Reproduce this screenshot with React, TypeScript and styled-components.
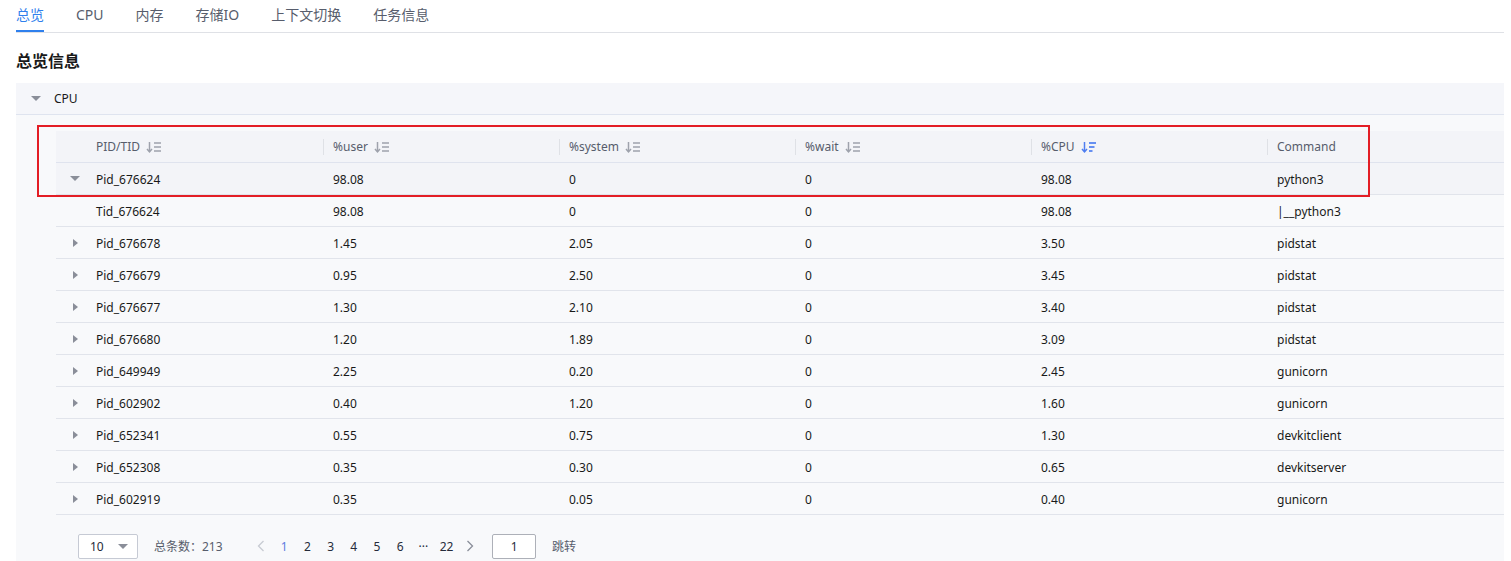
import React, { FC } from 'react'
import styled, { createGlobalStyle } from 'styled-components'

const GlobalStyle = createGlobalStyle`
    body {
        margin: 0;
        background: #ffffff;
        font-family: "Noto Sans", "Noto Sans CJK SC", sans-serif;
        color: #252b3a;
    }
`

const Page = styled.div`
    position: relative;
    padding: 0 7px 0 16px;
    width: 1511px;
    height: 561px;
    box-sizing: border-box;
    overflow: hidden;
`

const Tabs = styled.div`
    display: flex;
    gap: 32px;
    height: 32px;
    border-bottom: 1px solid #dfe1e6;
`

const Tab = styled.div<{ $active?: boolean }>`
    font-size: 14px;
    line-height: 30px;
    color: ${p => (p.$active ? '#2f80ed' : '#575d6c')};
    border-bottom: 2px solid ${p => (p.$active ? '#2f80ed' : 'transparent')};
`

const Title = styled.h2`
    margin: 16px 0 10px;
    font-size: 16px;
    font-weight: 700;
    line-height: 24px;
    color: #191919;
`

const Panel = styled.div`
    background: #f8f9fb;
`

const PanelHeader = styled.div`
    display: flex;
    align-items: center;
    gap: 13px;
    height: 32px;
    box-sizing: border-box;
    padding-left: 15px;
    background: #f5f6fa;
    border-bottom: 1px solid #dfe4ef;
    font-size: 12px;
    color: #191919;
`

const PanelBody = styled.div`
    padding: 16px 0 0 40px;
`

const Grid = styled.div`
    display: grid;
    grid-template-columns: 30px 237px 236px 236px 236px 236px 1fr;
    height: 32px;
    box-sizing: border-box;
`

const HeaderRow = styled(Grid)`
    background: #f3f4f8;
    border-bottom: 1px solid #dfe3ee;
`

const Row = styled(Grid)<{ $active?: boolean }>`
    background: ${p => (p.$active ? '#f3f4f8' : 'transparent')};
    border-bottom: 1px solid #e1e4eb;
`

const HeadCell = styled.div<{ $sep?: boolean }>`
    position: relative;
    display: flex;
    align-items: center;
    gap: 6px;
    padding-left: 10px;
    font-size: 12px;
    color: #575d6c;

    &::before {
        content: '';
        display: ${p => (p.$sep ? 'block' : 'none')};
        position: absolute;
        left: 0;
        top: 8px;
        height: 16px;
        border-left: 1px solid #dfe1e6;
    }
`

const Cell = styled.div`
    display: flex;
    align-items: center;
    padding: 1px 0 0 10px;
    font-size: 12px;
    color: #191919;
    white-space: nowrap;
`

const ExpandCell = styled.div`
    display: flex;
    align-items: center;
    padding-left: 13px;
`

const Caret = styled.span<{ $open?: boolean }>`
    display: inline-block;
    width: 0;
    height: 0;
    ${p =>
        p.$open
            ? `border-left: 5px solid transparent;
               border-right: 5px solid transparent;
               border-top: 5px solid #8a8e99;`
            : `border-top: 4.5px solid transparent;
               border-bottom: 4.5px solid transparent;
               border-left: 5px solid #8a8e99;`}
`

const CaretBox = styled.span`
    display: flex;
    align-items: center;
    justify-content: center;
    width: 12px;
`

const Pager = styled.div`
    display: flex;
    align-items: center;
    height: 46px;
    margin-top: 8px;
    padding-left: 22px;
    font-size: 12px;
    color: #575d6c;
`

const SizeSelect = styled.div`
    display: flex;
    align-items: center;
    justify-content: space-between;
    width: 60px;
    height: 25px;
    box-sizing: border-box;
    padding: 0 9px 0 11px;
    border: 1px solid #c6cad4;
    border-radius: 2px;
    background: #fff;
    color: #252b3a;
    margin-right: 16px;
`

const Total = styled.span`
    margin-right: 26px;
`

const PageList = styled.div`
    display: flex;
    align-items: center;
`

const PageItem = styled.span<{ $active?: boolean }>`
    min-width: 23.2px;
    text-align: center;
    color: ${p => (p.$active ? '#5e7ce0' : '#252b3a')};
`

const Arrow = styled.span<{ $disabled?: boolean }>`
    display: flex;
    align-items: center;
    justify-content: center;
    width: 24px;
    color: ${p => (p.$disabled ? '#c8cbd2' : '#8a8e99')};
`

const JumpInput = styled.div`
    width: 44px;
    height: 25px;
    box-sizing: border-box;
    margin: 0 16px 0 10px;
    border: 1px solid #adb0b8;
    border-radius: 2px;
    background: #fff;
    display: flex;
    align-items: center;
    justify-content: center;
    color: #252b3a;
`

const Highlight = styled.div`
    position: absolute;
    left: 37px;
    top: 125px;
    width: 1333px;
    height: 72px;
    box-sizing: border-box;
    border: 2px solid #e31d25;
    pointer-events: none;
`

const SortIcon: FC<{ active?: boolean }> = ({ active }) => {
    const c = active ? '#4f7ef0' : '#9ea2ac'
    return (
        <svg width="16" height="14" viewBox="0 0 16 14">
            <path d="M3.5 2 V11.5" stroke={c} strokeWidth="1.5" fill="none" />
            <path d="M1 9 L3.5 11.8 L6 9" stroke={c} strokeWidth="1.5" fill="none" />
            {active ? (
                <>
                    <path d="M8 3 H15" stroke={c} strokeWidth="1.7" />
                    <path d="M8 7 H13.5" stroke={c} strokeWidth="1.7" />
                    <path d="M8 11 H11.5" stroke={c} strokeWidth="1.7" />
                </>
            ) : (
                <>
                    <path d="M8 3 H15" stroke={c} strokeWidth="1.5" />
                    <path d="M8 7 H15" stroke={c} strokeWidth="1.5" />
                    <path d="M8 11 H15" stroke={c} strokeWidth="1.5" />
                </>
            )}
        </svg>
    )
}

const Chevron: FC<{ dir: 'left' | 'right' }> = ({ dir }) => (
    <svg width="8" height="12" viewBox="0 0 8 12">
        <path
            d={dir === 'left' ? 'M6.5 1 L1.5 6 L6.5 11' : 'M1.5 1 L6.5 6 L1.5 11'}
            stroke="currentColor"
            strokeWidth="1.3"
            fill="none"
        />
    </svg>
)

type Proc = {
    id: string
    user: string
    system: string
    wait: string
    cpu: string
    cmd: string
    kind: 'open' | 'closed' | 'child'
}

const rows: Proc[] = [
    { id: 'Pid_676624', user: '98.08', system: '0', wait: '0', cpu: '98.08', cmd: 'python3', kind: 'open' },
    { id: 'Tid_676624', user: '98.08', system: '0', wait: '0', cpu: '98.08', cmd: '|__python3', kind: 'child' },
    { id: 'Pid_676678', user: '1.45', system: '2.05', wait: '0', cpu: '3.50', cmd: 'pidstat', kind: 'closed' },
    { id: 'Pid_676679', user: '0.95', system: '2.50', wait: '0', cpu: '3.45', cmd: 'pidstat', kind: 'closed' },
    { id: 'Pid_676677', user: '1.30', system: '2.10', wait: '0', cpu: '3.40', cmd: 'pidstat', kind: 'closed' },
    { id: 'Pid_676680', user: '1.20', system: '1.89', wait: '0', cpu: '3.09', cmd: 'pidstat', kind: 'closed' },
    { id: 'Pid_649949', user: '2.25', system: '0.20', wait: '0', cpu: '2.45', cmd: 'gunicorn', kind: 'closed' },
    { id: 'Pid_602902', user: '0.40', system: '1.20', wait: '0', cpu: '1.60', cmd: 'gunicorn', kind: 'closed' },
    { id: 'Pid_652341', user: '0.55', system: '0.75', wait: '0', cpu: '1.30', cmd: 'devkitclient', kind: 'closed' },
    { id: 'Pid_652308', user: '0.35', system: '0.30', wait: '0', cpu: '0.65', cmd: 'devkitserver', kind: 'closed' },
    { id: 'Pid_602919', user: '0.35', system: '0.05', wait: '0', cpu: '0.40', cmd: 'gunicorn', kind: 'closed' },
]

const tabs = ['总览', 'CPU', '内存', '存储IO', '上下文切换', '任务信息']
const pages = ['1', '2', '3', '4', '5', '6', '···', '22']

const App: FC = () => {
    return (
        <Page>
            <GlobalStyle />
            <Tabs>
                {tabs.map((t, i) => (
                    <Tab key={t} $active={i === 0}>{t}</Tab>
                ))}
            </Tabs>
            <Title>总览信息</Title>
            <Panel>
                <PanelHeader>
                    <Caret $open />
                    <span>CPU</span>
                </PanelHeader>
                <PanelBody>
                    <HeaderRow>
                        <div />
                        <HeadCell>PID/TID <SortIcon /></HeadCell>
                        <HeadCell $sep>%user <SortIcon /></HeadCell>
                        <HeadCell $sep>%system <SortIcon /></HeadCell>
                        <HeadCell $sep>%wait <SortIcon /></HeadCell>
                        <HeadCell $sep>%CPU <SortIcon active /></HeadCell>
                        <HeadCell $sep>Command</HeadCell>
                    </HeaderRow>
                    {rows.map(r => (
                        <Row key={r.id} $active={r.kind === 'open'}>
                            <ExpandCell>
                                {r.kind !== 'child' && (
                                    <CaretBox>
                                        <Caret $open={r.kind === 'open'} />
                                    </CaretBox>
                                )}
                            </ExpandCell>
                            <Cell>{r.id}</Cell>
                            <Cell>{r.user}</Cell>
                            <Cell>{r.system}</Cell>
                            <Cell>{r.wait}</Cell>
                            <Cell>{r.cpu}</Cell>
                            <Cell>{r.cmd}</Cell>
                        </Row>
                    ))}
                    <Pager>
                        <SizeSelect>
                            <span>10</span>
                            <Caret $open />
                        </SizeSelect>
                        <Total>总条数：213</Total>
                        <Arrow $disabled><Chevron dir="left" /></Arrow>
                        <PageList>
                            {pages.map(p => (
                                <PageItem key={p} $active={p === '1'}>{p}</PageItem>
                            ))}
                        </PageList>
                        <Arrow><Chevron dir="right" /></Arrow>
                        <JumpInput>1</JumpInput>
                        <span>跳转</span>
                    </Pager>
                </PanelBody>
            </Panel>
            <Highlight />
        </Page>
    )
}

export default App
